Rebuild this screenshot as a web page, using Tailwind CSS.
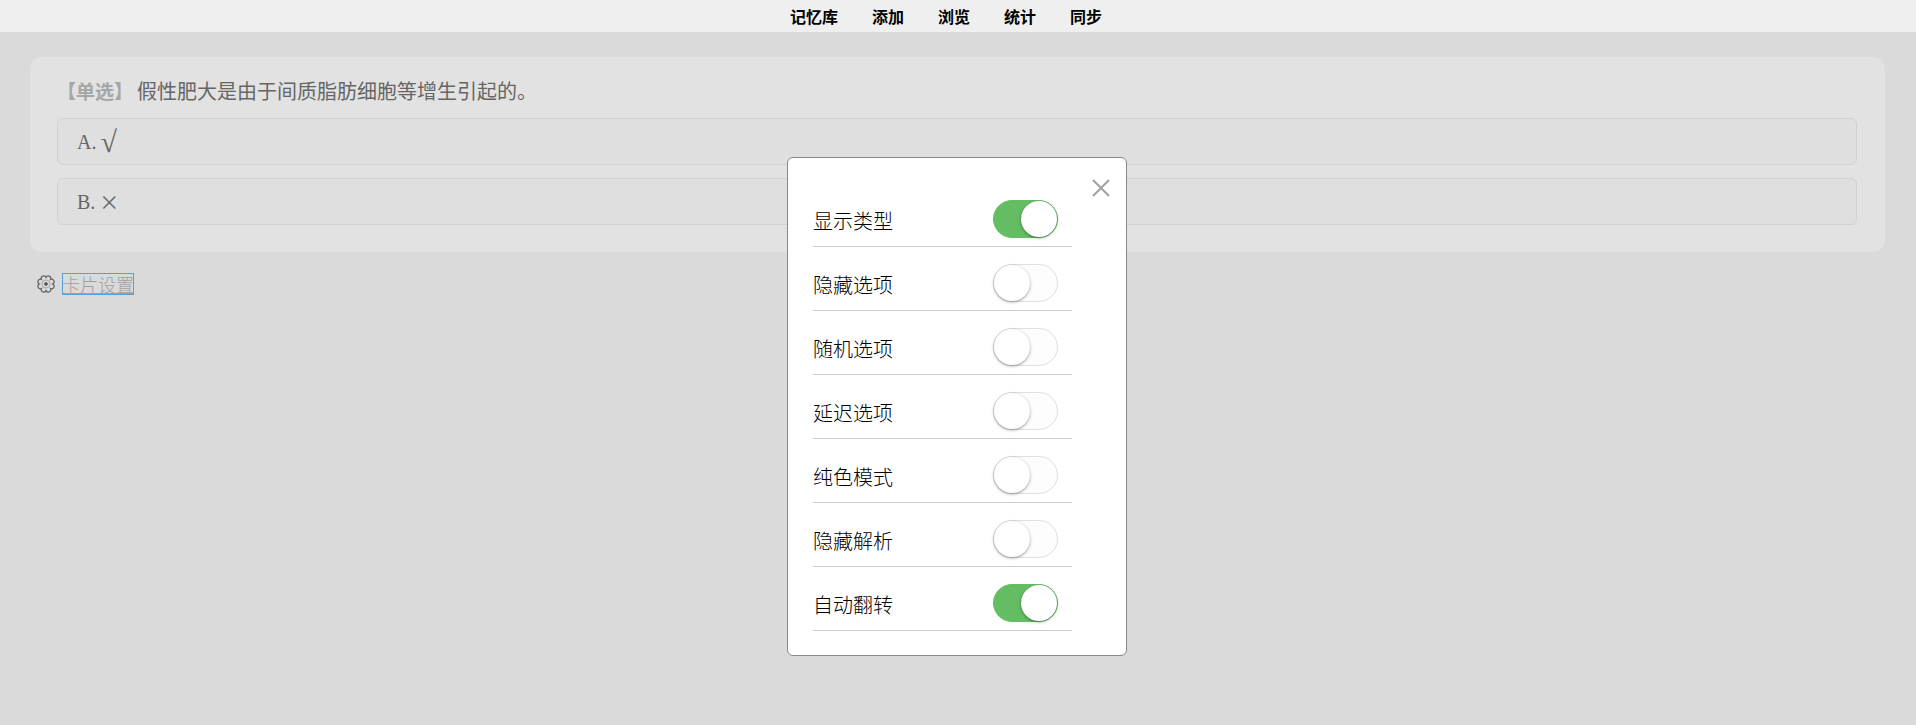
<!DOCTYPE html>
<html lang="zh-CN">
<head>
  <meta charset="UTF-8">
  <meta name="viewport" content="width=device-width, initial-scale=1.0">
  <title>卡片设置</title>
  <script src="https://cdn.jsdelivr.net/npm/@tailwindcss/browser@4"></script>
</head>
<body class="min-h-screen bg-[#dadada] font-['Noto_Sans_CJK_SC',sans-serif]">
  <!-- 顶部导航 -->
  <nav class="flex h-8 items-center justify-center gap-[34px] bg-[#efefef] pr-6 text-base font-bold text-black">
    <a href="#">记忆库</a>
    <a href="#">添加</a>
    <a href="#">浏览</a>
    <a href="#">统计</a>
    <a href="#">同步</a>
  </nav>

  <!-- 题目 -->
  <main class="pt-[25px] pr-[31px] pl-[30px]">
    <section class="rounded-xl bg-[#e2e2e2] pt-5 pr-7 pb-[27px] pl-[27px]">
      <p class="mb-[13px] flex items-center gap-1 text-xl leading-7 text-[#666]">
        <span class="text-[19px] font-bold text-[#a6a6a6]">【单选】</span>
        <span>假性肥大是由于间质脂肪细胞等增生引起的。</span>
      </p>
      <div class="flex flex-col gap-[13px] font-['Liberation_Serif','Noto_Sans_CJK_SC',serif] text-xl text-[#666]">
        <button type="button" class="flex h-[47px] items-center gap-1 rounded-md border border-[#d1d1d1] bg-[#dfdfdf] px-[19px]"><span>A.</span><span class="text-3xl leading-5">√</span></button>
        <button type="button" class="flex h-[47px] items-center gap-1 rounded-md border border-[#d1d1d1] bg-[#dfdfdf] px-[19px]"><span>B.</span><span class="font-['Noto_Sans_CJK_SC']">×</span></button>
      </div>
    </section>

    <div class="mt-[21px] flex items-center gap-[7px] pl-[7px]">
      <svg class="size-[18px]" viewBox="0 0 18 18" fill="none" stroke="#666">
        <path stroke-width="1.3" d="M9 2.4A2.53 2.53 0 0 1 13.67 4.33A2.53 2.53 0 0 1 15.6 9A2.53 2.53 0 0 1 13.67 13.67A2.53 2.53 0 0 1 9 15.6A2.53 2.53 0 0 1 4.33 13.67A2.53 2.53 0 0 1 2.4 9A2.53 2.53 0 0 1 4.33 4.33A2.53 2.53 0 0 1 9 2.4Z"/>
        <circle cx="9" cy="9" r="4" stroke="#aaa"/>
        <circle cx="9" cy="9" r="1.4" fill="#444" stroke="#666"/>
      </svg>
      <a href="#" class="text-lg leading-[22px] font-light text-[#a0a0a0] underline outline -outline-offset-1 outline-[#5b9fd8]">卡片设置</a>
    </div>
  </main>

  <!-- 设置弹窗 -->
  <div class="absolute inset-x-0 top-[157px] flex justify-center pr-0.5">
    <div role="dialog" aria-label="卡片设置" class="relative w-[340px] rounded-md border border-[#888] bg-white pt-[25px] pr-[54px] pb-6 pl-[25px] text-xl font-light text-black">
      <button type="button" aria-label="关闭" class="absolute top-5 right-[15px]">
        <svg class="size-5" viewBox="0 0 20 20" stroke="#a0a0a0" stroke-width="2"><path d="M2 2L18 18M18 2L2 18"/></svg>
      </button>
      <label class="flex h-16 items-center justify-between border-b border-[#ccc] pt-2 pr-[14px]">
        <span class="pt-1">显示类型</span>
        <input type="checkbox" checked class="h-[38px] w-[65px] appearance-none rounded-full border border-[#dfdfdf] bg-[#fdfdfd] before:block before:size-9 before:rounded-full before:bg-white before:shadow-[0_1px_3px_rgba(0,0,0,0.4)] checked:border-[#64bd63] checked:bg-[#64bd63] checked:before:ml-[27px]">
      </label>
      <label class="flex h-16 items-center justify-between border-b border-[#ccc] pt-2 pr-[14px]">
        <span class="pt-1">隐藏选项</span>
        <input type="checkbox" class="h-[38px] w-[65px] appearance-none rounded-full border border-[#dfdfdf] bg-[#fdfdfd] before:block before:size-9 before:rounded-full before:bg-white before:shadow-[0_1px_3px_rgba(0,0,0,0.4)] checked:border-[#64bd63] checked:bg-[#64bd63] checked:before:ml-[27px]">
      </label>
      <label class="flex h-16 items-center justify-between border-b border-[#ccc] pt-2 pr-[14px]">
        <span class="pt-1">随机选项</span>
        <input type="checkbox" class="h-[38px] w-[65px] appearance-none rounded-full border border-[#dfdfdf] bg-[#fdfdfd] before:block before:size-9 before:rounded-full before:bg-white before:shadow-[0_1px_3px_rgba(0,0,0,0.4)] checked:border-[#64bd63] checked:bg-[#64bd63] checked:before:ml-[27px]">
      </label>
      <label class="flex h-16 items-center justify-between border-b border-[#ccc] pt-2 pr-[14px]">
        <span class="pt-1">延迟选项</span>
        <input type="checkbox" class="h-[38px] w-[65px] appearance-none rounded-full border border-[#dfdfdf] bg-[#fdfdfd] before:block before:size-9 before:rounded-full before:bg-white before:shadow-[0_1px_3px_rgba(0,0,0,0.4)] checked:border-[#64bd63] checked:bg-[#64bd63] checked:before:ml-[27px]">
      </label>
      <label class="flex h-16 items-center justify-between border-b border-[#ccc] pt-2 pr-[14px]">
        <span class="pt-1">纯色模式</span>
        <input type="checkbox" class="h-[38px] w-[65px] appearance-none rounded-full border border-[#dfdfdf] bg-[#fdfdfd] before:block before:size-9 before:rounded-full before:bg-white before:shadow-[0_1px_3px_rgba(0,0,0,0.4)] checked:border-[#64bd63] checked:bg-[#64bd63] checked:before:ml-[27px]">
      </label>
      <label class="flex h-16 items-center justify-between border-b border-[#ccc] pt-2 pr-[14px]">
        <span class="pt-1">隐藏解析</span>
        <input type="checkbox" class="h-[38px] w-[65px] appearance-none rounded-full border border-[#dfdfdf] bg-[#fdfdfd] before:block before:size-9 before:rounded-full before:bg-white before:shadow-[0_1px_3px_rgba(0,0,0,0.4)] checked:border-[#64bd63] checked:bg-[#64bd63] checked:before:ml-[27px]">
      </label>
      <label class="flex h-16 items-center justify-between border-b border-[#ccc] pt-2 pr-[14px]">
        <span class="pt-1">自动翻转</span>
        <input type="checkbox" checked class="h-[38px] w-[65px] appearance-none rounded-full border border-[#dfdfdf] bg-[#fdfdfd] before:block before:size-9 before:rounded-full before:bg-white before:shadow-[0_1px_3px_rgba(0,0,0,0.4)] checked:border-[#64bd63] checked:bg-[#64bd63] checked:before:ml-[27px]">
      </label>
    </div>
  </div>
</body>
</html>
